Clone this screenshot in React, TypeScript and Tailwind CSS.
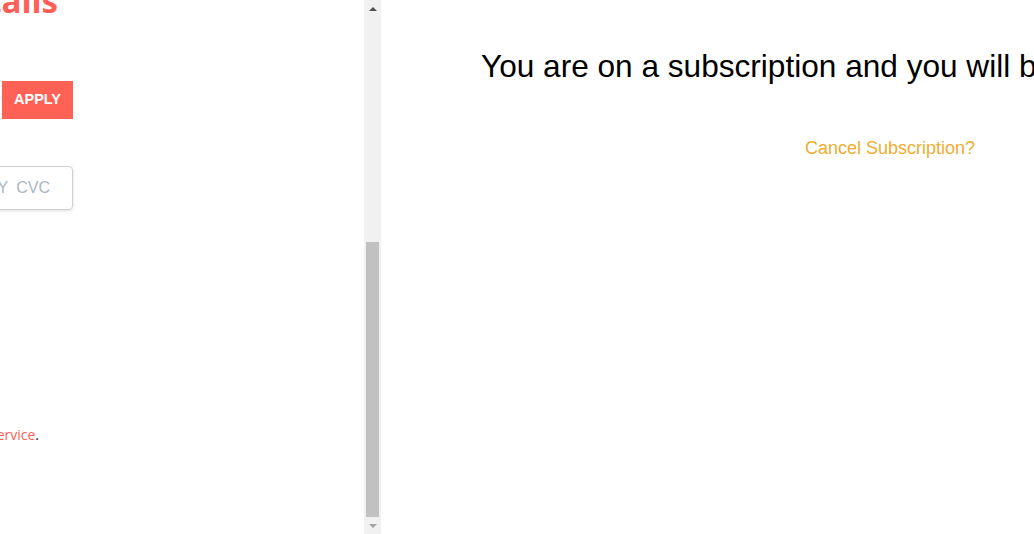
function Scrollbar() {
  return (
    <div className="flex h-full w-[17px] shrink-0 flex-col bg-[#f1f1f1]">
      <div className="flex h-[17px] items-center justify-center">
        <div className="h-0 w-0 border-x-[4px] border-b-[4px] border-x-transparent border-b-[#505050]" />
      </div>
      <div className="flex-1 px-[2px] pt-[225px]">
        <div className="h-[275px] w-full bg-[#c1c1c1]" />
      </div>
      <div className="flex h-[17px] items-center justify-center">
        <div className="h-0 w-0 border-x-[4px] border-t-[4px] border-x-transparent border-t-[#a3a3a3]" />
      </div>
    </div>
  );
}

function PaymentPane() {
  return (
    <div className="relative h-full w-[364px] overflow-hidden font-['Open_Sans',sans-serif]">
      <div className="-mt-[19px] flex w-[58px] justify-end">
        <h2 className="whitespace-nowrap text-[33px] font-bold leading-[40px] text-[#ff5f57]">Payment Details</h2>
      </div>

      <div className="mt-[60px] flex w-[73px] justify-end">
        <button className="h-[38px] shrink-0 bg-[#ff6154] px-[12px] font-['Liberation_Sans',sans-serif] text-[14.5px] font-bold text-white">
          APPLY
        </button>
      </div>

      <div className="mt-[47px] flex w-[73px] justify-end">
        <div className="flex h-[44px] w-[200px] shrink-0 items-center justify-end rounded-[4px] border border-[#d0d0d0] pr-[22px] font-['Liberation_Sans',sans-serif] text-[16px] text-[#aab7c4] shadow-[0_1px_3px_rgba(0,0,0,0.12)]">
          <span className="whitespace-nowrap">MM / YY</span>
          <span className="ml-[8px]">CVC</span>
        </div>
      </div>

      <div className="mt-[214px] flex w-[39px] justify-end">
        <p className="whitespace-nowrap text-[14px] text-[#222]">
          By subscribing you agree to our <span className="text-[#ff5f57]">Terms of Service</span>.
        </p>
      </div>
    </div>
  );
}

export default function App() {
  return (
    <div className="flex h-[534px] w-[1034px] overflow-hidden bg-white">
      <PaymentPane />
      <Scrollbar />
      <div className="flex-1 overflow-hidden font-['Liberation_Sans',Arial,sans-serif]">
        <div className="pl-[100px] pt-[46px]">
          <p className="whitespace-nowrap text-[31.6px] leading-[40px] text-black">
            You are on a subscription and you will be charged automatically each month.
          </p>
          <div className="mt-[50px] pl-[324px]">
            <a href="#" className="whitespace-nowrap text-[18px] leading-[24px] text-[#f0ad30]">
              Cancel Subscription?
            </a>
          </div>
        </div>
      </div>
    </div>
  );
}
